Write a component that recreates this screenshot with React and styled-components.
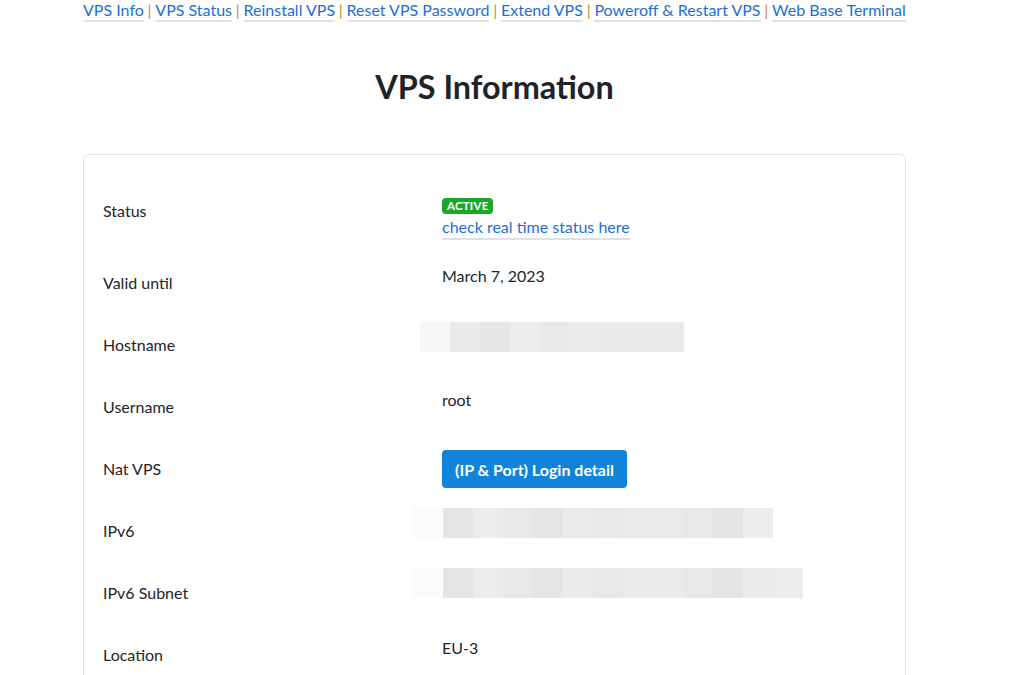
import React from "react";
import styled, { createGlobalStyle } from "styled-components";

const Global = createGlobalStyle`
  html, body { margin: 0; padding: 0; background: #fff; }
  body { font-family: Lato, "Open Sans", sans-serif; color: #212529; font-size: 16px; }
`;

const Page = styled.div`
  width: 823px;
  margin-left: 83px;
`;

const Nav = styled.nav`
  display: flex;
  flex-wrap: nowrap;
  white-space: nowrap;
  align-items: flex-start;
  font-size: 16px;
  line-height: 20px;
`;

const NavLink = styled.a`
  color: #1b6fd6;
  text-decoration: none;
  border-bottom: 2px solid #dde0e4;
`;

const Sep = styled.span`
  color: #d08a32;
  padding: 0 3.75px;
`;

const Title = styled.h1`
  margin: 45px 0 0;
  text-align: center;
  font-size: 32.4px;
  font-weight: 700;
  line-height: 40px;
  color: #1f2328;
`;

const Card = styled.div`
  margin-top: 47px;
  border: 1px solid #e2e2e2;
  border-radius: 6px;
  padding: 14px 19px 0;
  height: 600px;
`;

const Row = styled.div`
  display: grid;
  grid-template-columns: 339px 1fr;
  min-height: ${(p) => p.$h || 62}px;
`;

const Label = styled.div`
  align-self: center;
  font-size: 16px;
  line-height: 24px;
`;

const Value = styled.div`
  padding-top: ${(p) => p.$top ?? 12}px;
  font-size: 16px;
  line-height: 24px;
  display: flex;
  flex-direction: column;
  align-items: flex-start;
`;

const Badge = styled.span`
  background: #19a82a;
  color: #fff;
  font-weight: 700;
  font-size: 11.5px;
  line-height: 16px;
  padding: 0 5px;
  border-radius: 4px;
  letter-spacing: 0.2px;
`;

const StatusLink = styled.a`
  margin-top: 2px;
  color: #1b6fd6;
  text-decoration: none;
  font-size: 16px;
  line-height: 22px;
  border-bottom: 2px solid #dde0e4;
`;

const Button = styled.button`
  background: #1283db;
  color: #fff;
  border: none;
  border-radius: 4px;
  font-family: Lato, sans-serif;
  font-weight: 700;
  font-size: 16px;
  height: 38px;
  padding: 0 13px;
`;

const Blur = styled.div`
  display: flex;
  height: 30px;
  margin-left: ${(p) => p.$offset}px;
`;

const Cell = styled.div`
  width: ${(p) => p.$w || 30}px;
  height: 30px;
  background: ${(p) => p.$c};
`;

const hostCells = ["#f7f7f7", "#e8e9e9", "#e6e7e6", "#ebeceb", "#e8e8e8", "#e9eae9", "#e8e9e8", "#e9e9e9", "#e8e9e8"];
const v6Cells = ["#fbfbfb", "#e5e5e5", "#ececec", "#e8e8e8", "#e5e5e5", "#eaebea", "#e8e8e8", "#eaeaea", "#eaebea", "#e8e8e6", "#e4e4e4", "#ececec"];
const subCells = [...v6Cells.slice(0, 11), "#eaebea", "#ececec"];

function Pixels({ cells, offset, last = 30 }) {
  return (
    <Blur $offset={offset}>
      {cells.map((c, i) => (
        <Cell key={i} $c={c} $w={i === cells.length - 1 ? last : 30} />
      ))}
    </Blur>
  );
}

const links = ["VPS Info", "VPS Status", "Reinstall VPS", "Reset VPS Password", "Extend VPS", "Poweroff & Restart VPS", "Web Base Terminal"];

export default function App() {
  return (
    <Page>
      <Global />
      <Nav>
        {links.map((l, i) => (
          <React.Fragment key={l}>
            {i > 0 && <Sep>|</Sep>}
            <NavLink href="#">{l}</NavLink>
          </React.Fragment>
        ))}
      </Nav>
      <Title>VPS Information</Title>
      <Card>
        <Row $h={83}>
          <Label>Status</Label>
          <Value $top={29}>
            <Badge>ACTIVE</Badge>
            <StatusLink href="#">check real time status here</StatusLink>
          </Value>
        </Row>
        <Row>
          <Label>Valid until</Label>
          <Value>March 7, 2023</Value>
        </Row>
        <Row>
          <Label>Hostname</Label>
          <Value $top={8}>
            <Pixels cells={hostCells} offset={-22} last={24} />
          </Value>
        </Row>
        <Row>
          <Label>Username</Label>
          <Value>root</Value>
        </Row>
        <Row>
          <Label>Nat VPS</Label>
          <Value>
            <Button>(IP &amp; Port) Login detail</Button>
          </Value>
        </Row>
        <Row>
          <Label>IPv6</Label>
          <Value $top={8}>
            <Pixels cells={v6Cells} offset={-29} />
          </Value>
        </Row>
        <Row>
          <Label>IPv6 Subnet</Label>
          <Value $top={6}>
            <Pixels cells={subCells} offset={-29} />
          </Value>
        </Row>
        <Row>
          <Label>Location</Label>
          <Value>EU-3</Value>
        </Row>
      </Card>
    </Page>
  );
}
